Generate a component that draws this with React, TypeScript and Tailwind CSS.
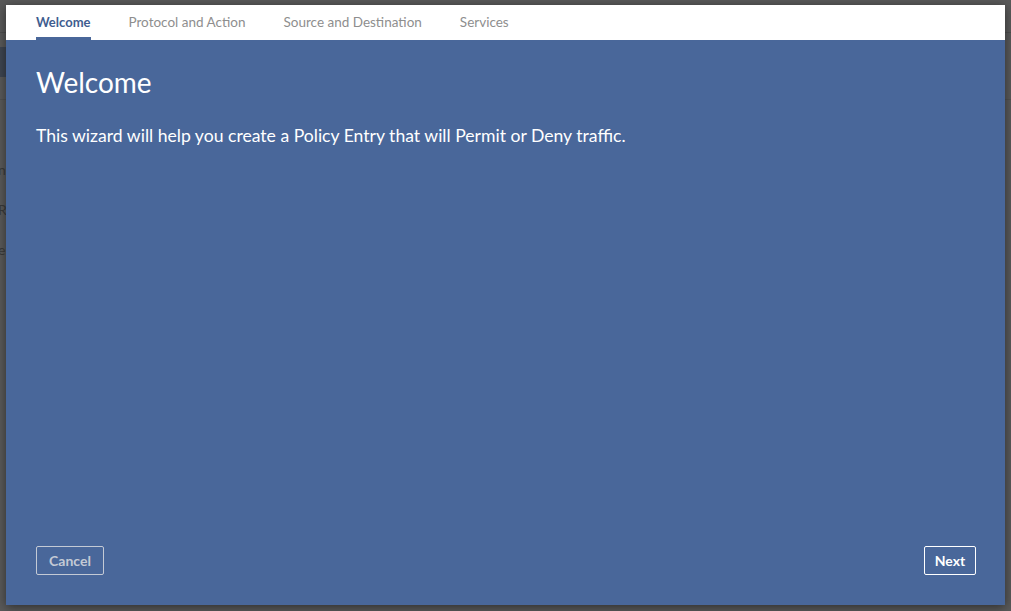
import React from "react";

export default function App() {
  const font = { fontFamily: '"Lato", "Noto Sans", sans-serif' };
  return (
    <div className="relative w-[1011px] h-[611px] overflow-hidden bg-[#5a5a5a]" style={font}>
      {/* faint background page */}
      <div className="absolute inset-0 flex flex-col">
        <div className="h-[33px] border-b border-[#4e4e4e]" />
        <div className="mt-[14px] h-[30px] w-[10px] bg-[#3f4652]" />
        <div className="mt-[22px] h-px bg-[#525252]" />
        <div className="mt-[60px] text-[14px] leading-[20px] text-[#3a3a3a] pl-0 flex flex-col gap-[20px]">
          <span className="-ml-[2px]">n</span>
          <span className="-ml-[2px]">R</span>
          <span className="-ml-[2px]">e</span>
        </div>
      </div>

      <div className="relative ml-[6px] mt-[5px] w-[999px] h-[600px] flex flex-col shadow-[0_2px_10px_rgba(0,0,0,0.5)]">
        <div className="h-[35px] bg-white flex items-stretch pl-[30px] gap-[38px] text-[13.5px]">
          <div className="flex items-center text-[13px] font-bold text-[#3f5d8f] border-b-[3px] border-[#49679a] pt-[3px]">
            Welcome
          </div>
          <div className="flex items-center text-[#8e8e8e]">Protocol and Action</div>
          <div className="flex items-center text-[#8e8e8e]">Source and Destination</div>
          <div className="flex items-center text-[#8e8e8e]">Services</div>
        </div>
        <div className="flex-1 bg-[#49679a] flex flex-col px-[30px] pt-[25px] pb-[30px] text-white">
          <h1 className="text-[28px] leading-[34px] font-normal">Welcome</h1>
          <p className="mt-[24px] text-[17.6px] leading-[26px]">
            This wizard will help you create a Policy Entry that will Permit or Deny traffic.
          </p>
          <div className="mt-auto flex justify-between">
            <button className="h-[29px] w-[68px] border border-[#c4cad5] rounded-[2px] text-[14px] font-bold text-[#c4cad5]">
              Cancel
            </button>
            <button className="-mr-[1px] h-[29px] w-[52px] border border-white rounded-[2px] text-[14px] font-bold text-white">
              Next
            </button>
          </div>
        </div>
      </div>
    </div>
  );
}
